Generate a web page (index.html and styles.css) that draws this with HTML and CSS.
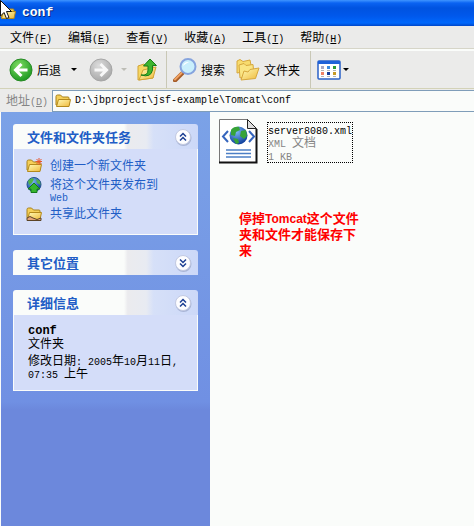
FILE: index.html
```html
<!DOCTYPE html>
<html lang="zh-CN">
<head>
    <meta charset="UTF-8">
    <meta name="viewport" content="width=device-width, initial-scale=1.0">
    <title>conf</title>
    <link rel="stylesheet" href="styles.css">
</head>
<body>
    <svg width="0" height="0" class="defs" aria-hidden="true">
        <defs>
            <linearGradient id="gold" x1="0" y1="0" x2="1" y2="1">
                <stop offset="0" stop-color="#fffbb8"/>
                <stop offset="1" stop-color="#efb93a"/>
            </linearGradient>
            <radialGradient id="green" cx="0.4" cy="0.3" r="0.7">
                <stop offset="0" stop-color="#7fdc62"/>
                <stop offset="1" stop-color="#1f9a22"/>
            </radialGradient>
            <radialGradient id="grey" cx="0.4" cy="0.3" r="0.7">
                <stop offset="0" stop-color="#dcdcdc"/>
                <stop offset="1" stop-color="#a9a9a9"/>
            </radialGradient>
            <radialGradient id="sea" cx="0.4" cy="0.3" r="0.7">
                <stop offset="0" stop-color="#7db8f4"/>
                <stop offset="1" stop-color="#0f3f9c"/>
            </radialGradient>
            <symbol id="folder" viewBox="0 0 16 16">
                <path d="M1 12V3.500Q1 2 2.500 2H5.500L7.500 4H13Q14 4 14 5V12Z" fill="#f5cf58" stroke="#a8811b"/>
                <path d="M1.500 13.500L3.500 6.500H15.500L14 13.500Z" fill="url(#gold)" stroke="#b48a1c"/>
            </symbol>
            <symbol id="chevrons" viewBox="0 0 18 18">
                <circle cx="9.500" cy="10" r="8" fill="#a9b5d6"/>
                <circle cx="9" cy="9" r="7.500" fill="#fdfdff" stroke="#c3cae2"/>
                <path d="M6 8.500L9 5.500L12 8.500M6 12.500L9 9.500L12 12.500" fill="none" stroke="#1c3f94" stroke-width="1.500"/>
            </symbol>
        </defs>
    </svg>

    <header class="title-bar">
        <svg class="icon-small" viewBox="0 0 16 16"><use href="#folder"/></svg>
        <h1 class="title">conf</h1>
        <svg class="cursor" viewBox="0 0 12 20"><path d="M0.500 0.500V16L4 12.500L6.500 18.500L9 17.500L6.500 11.500H11.500Z" fill="#fff" stroke="#111"/></svg>
    </header>

    <nav class="menu-bar">
        <button class="menu">文件<span class="en">(<u>F</u>)</span></button>
        <button class="menu">编辑<span class="en">(<u>E</u>)</span></button>
        <button class="menu">查看<span class="en">(<u>V</u>)</span></button>
        <button class="menu">收藏<span class="en">(<u>A</u>)</span></button>
        <button class="menu">工具<span class="en">(<u>T</u>)</span></button>
        <button class="menu">帮助<span class="en">(<u>H</u>)</span></button>
    </nav>

    <div class="toolbar">
        <div class="tool-group">
            <button class="tool">
                <svg class="icon-tool" viewBox="0 0 24 24">
                    <circle cx="12" cy="12" r="11" fill="url(#green)" stroke="#278a25"/>
                    <path d="M12.500 6L6.500 12L12.500 18M7 12H18.500" fill="none" stroke="#fff" stroke-width="3"/>
                </svg>
                后退
            </button>
            <button class="drop" aria-label="后退列表"><svg class="arrow" viewBox="0 0 6 3"><path d="M0 0H6L3 3Z" fill="#000"/></svg></button>
            <button class="tool" aria-label="前进" disabled>
                <svg class="icon-tool" viewBox="0 0 24 24">
                    <circle cx="12" cy="12" r="11" fill="url(#grey)" stroke="#a6a6a6"/>
                    <path d="M11.500 6L17.500 12L11.500 18M17 12H5.500" fill="none" stroke="#f8f8f8" stroke-width="3"/>
                </svg>
            </button>
            <button class="drop" aria-label="前进列表" disabled><svg class="arrow" viewBox="0 0 6 3"><path d="M0 0H6L3 3Z" fill="#bdbdb6"/></svg></button>
            <button class="tool" aria-label="向上">
                <svg class="icon-tool" viewBox="0 0 24 24">
                    <path d="M2 22V8L8 6L10 8L17 6V20Z" fill="#f6d763" stroke="#d1a336"/>
                    <path d="M3 22L7 12L20 9L17 20Z" fill="url(#gold)" stroke="#d1a336"/>
                    <path d="M5 17Q12 18 12 12V8H7.500L14 1L20.500 7.500H16.500V12Q15 20 5 17Z" fill="#3fb52f" stroke="#167d18"/>
                </svg>
            </button>
        </div>
        <div class="tool-group">
            <button class="tool">
                <svg class="icon-tool" viewBox="0 0 24 24">
                    <path d="M9.500 15L2 22.500" stroke="#a55b28" stroke-width="4" stroke-linecap="round"/>
                    <path d="M8.500 15L2 21.500" stroke="#f0a262" stroke-width="2" stroke-linecap="round"/>
                    <circle cx="15" cy="8.500" r="7.500" fill="#c9effc" stroke="#86a4de" stroke-width="2"/>
                    <path d="M10 8Q11 3.500 16 4Q12 6 10 8Z" fill="#fff"/>
                </svg>
                搜索
            </button>
            <button class="tool folders">
                <svg class="icon-tool" viewBox="0 0 24 24">
                    <path d="M1 15V3L4 1.500L7 3.500L14 2L16 12Z" fill="#f8dc6e" stroke="#d6a73d"/>
                    <path d="M4 20L3 7L8 5.500L10 7.500L17 6.500L18 17Z" fill="#fae583" stroke="#d6a73d"/>
                    <path d="M5 22L8 13L12 14L14 11.500L23 10L19.500 20.500Z" fill="url(#gold)" stroke="#d6a73d"/>
                </svg>
                文件夹
            </button>
        </div>
        <div class="tool-group">
            <button class="tool view" aria-label="查看方式">
                <svg class="icon-tool" viewBox="0 0 24 24">
                    <rect x="1" y="3" width="22" height="18" rx="1" fill="#fff" stroke="#2a62c8" stroke-width="1.500"/>
                    <path d="M1 3H23V6H1Z" fill="#1f62d8"/>
                    <path d="M4 8H7V11H4Z" fill="#a9a9c4"/>
                    <path d="M4 14H7V17H4Z" fill="#f08264"/>
                    <path d="M10 8H13V11H10Z" fill="#3b8be0"/>
                    <path d="M10 14H13V17H10Z" fill="#173f9c"/>
                    <path d="M16 8H19V11H16Z" fill="#2b9b35"/>
                    <path d="M16 14H19V17H16Z" fill="#c69a27"/>
                    <path d="M4 12.500H7M10 12.500H13M16 12.500H19M4 18.500H7M10 18.500H13M16 18.500H19" stroke="#b5b5b5"/>
                </svg>
                <svg class="arrow" viewBox="0 0 6 3"><path d="M0 0H6L3 3Z" fill="#000"/></svg>
            </button>
        </div>
    </div>

    <div class="address-bar">
        <label class="address-label" for="address">地址<span class="en">(<u>D</u>)</span></label>
        <div class="address-field">
            <svg class="icon-small" viewBox="0 0 16 16"><use href="#folder"/></svg>
            <input class="address-input" id="address" type="text" value="D:\jbproject\jsf-example\Tomcat\conf" spellcheck="false">
        </div>
    </div>

    <div class="content">
        <aside class="sidebar">
            <section class="panel">
                <div class="panel-head">
                    <h2 class="panel-title">文件和文件夹任务</h2>
                    <button class="toggle" aria-label="收起"><svg class="chevron" viewBox="0 0 18 18"><use href="#chevrons"/></svg></button>
                </div>
                <div class="panel-body tasks">
                    <a class="task" href="#">
                        <svg class="icon-small" viewBox="0 0 16 16">
                            <use href="#folder"/>
                            <path d="M13 0V7M9.500 3.500H16M10.500 1L15.500 6M15.500 1L10.500 6" stroke="#e8572c"/>
                        </svg>
                        <span>创建一个新文件夹</span>
                    </a>
                    <a class="task" href="#">
                        <svg class="icon-small" viewBox="0 0 16 16">
                            <circle cx="8" cy="7.500" r="7" fill="url(#sea)" stroke="#25528e"/>
                            <path d="M2 4Q5 0 8 2L6 6L3 8ZM10 2L14 4L14.500 8L11 6Z" fill="#50b34a"/>
                            <path d="M8 6L14 12H11V15.500H5V12H2Z" fill="#36b52e" stroke="#137a1b"/>
                        </svg>
                        <span>将这个文件夹发布到<br><span class="en">Web</span></span>
                    </a>
                    <a class="task" href="#">
                        <svg class="icon-small" viewBox="0 0 16 16">
                            <use href="#folder"/>
                            <path d="M1 12Q4 9 7 12L11 13.500L15 12V14.500H1Z" fill="#e5a577" stroke="#5b4427"/>
                        </svg>
                        <span>共享此文件夹</span>
                    </a>
                </div>
            </section>

            <section class="panel">
                <div class="panel-head">
                    <h2 class="panel-title">其它位置</h2>
                    <button class="toggle" aria-label="展开">
                        <svg class="chevron" viewBox="0 0 18 18">
                            <circle cx="9.500" cy="10" r="8" fill="#a9b5d6"/>
                            <circle cx="9" cy="9" r="7.500" fill="#fdfdff" stroke="#c3cae2"/>
                            <path d="M6 5.500L9 8.500L12 5.500M6 9.500L9 12.500L12 9.500" fill="none" stroke="#1c3f94" stroke-width="1.500"/>
                        </svg>
                    </button>
                </div>
            </section>

            <section class="panel">
                <div class="panel-head">
                    <h2 class="panel-title">详细信息</h2>
                    <button class="toggle" aria-label="收起"><svg class="chevron" viewBox="0 0 18 18"><use href="#chevrons"/></svg></button>
                </div>
                <div class="panel-body details">
                    <p class="detail-name">conf</p>
                    <p class="detail">文件夹</p>
                    <p class="detail date">修改日期<span class="en">: 2005</span>年<span class="en">10</span>月<span class="en">11</span>日<span class="en">, 07:35 </span>上午</p>
                </div>
            </section>
        </aside>

        <main class="files">
            <div class="file">
                <svg class="file-icon" viewBox="0 0 40 46">
                    <path d="M1.500 1.500H29.500L38.500 10.500V44.500H1.500Z" fill="#fff" stroke="#777"/>
                    <path d="M1 44.500H38.500V11" fill="none" stroke="#111" stroke-width="2"/>
                    <path d="M29.500 1.500V10.500H38.500Z" fill="#ddd" stroke="#222"/>
                    <path d="M10 13L5 18.500L10 24M31 13L36 18.500L31 24" fill="none" stroke="#3565bd" stroke-width="2"/>
                    <circle cx="20.500" cy="17.500" r="9" fill="url(#sea)"/>
                    <path d="M13 12Q16 8 21 9L22 12L18 14L17 18L13 17ZM23 13L28 12L29 18L26 21L22 18ZM15 20L20 21L21 25L18 26Z" fill="#37a338"/>
                    <path d="M8 32H33M8 35.500H33M8 39H33" stroke="#4c7fc5" stroke-width="1.500"/>
                </svg>
                <div class="file-text">
                    <p class="file-name"><span class="en">server8080.xml</span></p>
                    <p><span class="en">XML </span>文档</p>
                    <p><span class="en">1 KB</span></p>
                </div>
            </div>
            <p class="note">停掉<span class="note-en">Tomcat</span>这个文件夹和文件才能保存下来</p>
        </main>
    </div>
</body>
</html>
```

FILE: styles.css
```css
* {
    box-sizing: border-box;
}
body {
    margin: 0;
    min-height: 100vh;
    display: flex;
    flex-direction: column;
    background-color: #fafcfa;
    color: #000;
    font-family: "Noto Sans CJK SC", sans-serif;
    font-size: 12px;
    line-height: 12px;
}
h1, h2, p {
    margin: 0;
}
button {
    padding: 0;
    border: none;
    background: none;
    color: inherit;
    font: inherit;
}
svg {
    display: block;
    flex: none;
}
.defs {
    position: absolute;
}
/* latin text is half the width of a chinese character */
.en {
    font-family: "Liberation Mono", monospace;
    font-size: 10px;
    line-height: 8px;
}
.icon-small {
    width: 16px;
    height: 16px;
}

/* title bar */
.title-bar {
    position: relative;
    display: flex;
    align-items: center;
    gap: 6px;
    height: 26px;
    background: linear-gradient(#3f95ff 0, #0a63f2 3px, #0053e0 8px, #0058ec 16px, #0068fc 23px, #0046c8 26px);
}
.title {
    color: #fff;
    font-family: "Liberation Mono", monospace;
    font-size: 13px;
    text-shadow: 1px 1px #0a2a80;
}
.cursor {
    position: absolute;
    left: 0;
    top: 0;
    width: 12px;
    height: 20px;
}

/* menu and tools */
.menu-bar {
    display: flex;
    height: 23px;
    padding: 0 2px;
    background-color: #ebebea;
    border-bottom: 1px solid #d6d5c8;
}
.menu {
    padding: 0 8px;
}
.toolbar {
    display: flex;
    height: 40px;
    border-top: 2px solid #fafcfa;
    border-bottom: 1px solid #d3d2b8;
    background-color: #ebebea;
}
.tool-group {
    display: flex;
    align-items: center;
    padding: 0 6px;
}
.tool-group:first-child {
    padding-left: 9px;
}
.tool-group + .tool-group {
    border-left: 1px solid #c9c8b6;
}
.tool {
    display: flex;
    align-items: center;
    gap: 4px;
}
.folders {
    margin-left: 11px;
}
.tool-group:nth-child(2) {
    padding-right: 10px;
}
.view {
    gap: 2px;
}
.icon-tool {
    width: 24px;
    height: 24px;
}
.drop {
    padding: 0 12px 0 10px;
}
.drop:disabled {
    padding: 0 9px 0 8px;
}
.arrow {
    width: 6px;
    height: 3px;
}

/* address */
.address-bar {
    display: flex;
    align-items: center;
    height: 23px;
    background-color: #ebebea;
}
.address-label {
    width: 52px;
    padding-left: 6px;
    color: #858585;
}
.address-field {
    flex: 1;
    display: flex;
    align-items: center;
    gap: 4px;
    height: 22px;
    padding-left: 2px;
    border: 1px solid #7f9db9;
    border-right: none;
    background-color: #fafcfa;
}
.address-input {
    flex: 1;
    min-width: 0;
    padding: 0;
    border: none;
    outline: none;
    background: none;
    color: #000;
    font-family: "Liberation Mono", monospace;
    font-size: 10px;
}

/* side panels */
.content {
    flex: 1;
    display: flex;
}
.sidebar {
    width: 210px;
    display: flex;
    flex-direction: column;
    gap: 15px;
    padding: 12px;
    border-left: 1px solid #fafcfa;
    background: linear-gradient(#7ba2e7, #7090e3 70%, #6c88dc 72%, #6c88dc);
}
.panel-head {
    display: flex;
    align-items: center;
    justify-content: space-between;
    height: 25px;
    padding: 0 6px 0 14px;
    border-radius: 3px 3px 0 0;
    background: linear-gradient(90deg, #fafcfa 60%, #ebebee 62%, #e8ebf2 72%, #d6e0f8 76%, #ccd8f8);
}
.panel-title {
    color: #215dc6;
    font-size: 13px;
    line-height: 16px;
}
.chevron {
    width: 18px;
    height: 18px;
}
.panel-body {
    border: 1px solid #fafcfa;
    border-top: none;
    background-color: #d4ddf9;
}
.tasks {
    display: flex;
    flex-direction: column;
    gap: 3px;
    padding: 9px 12px 12px;
}
.task {
    display: flex;
    gap: 8px;
    color: #215dc6;
    text-decoration: none;
}
.task > span {
    padding-top: 1px;
}
.details {
    padding: 10px 14px;
}
.detail-name {
    font-family: "Liberation Mono", monospace;
    font-weight: bold;
}
.date {
    margin-top: 5px;
}

/* file list */
.files {
    flex: 1;
    padding: 6px 8px;
}
.file {
    display: flex;
    align-items: flex-start;
    gap: 9px;
}
.file-icon {
    width: 40px;
    height: 46px;
}
.file-text {
    margin-top: 4px;
    border: 1px dotted #000;
    color: #858585;
}
.file-name {
    color: #000;
}
.note {
    width: 124px;
    margin: 46px 0 0 21px;
    color: #f00;
    font-size: 13px;
    font-weight: bold;
    line-height: 16px;
}
.note-en {
    font-family: "Liberation Sans", sans-serif;
    font-size: 12px;
    line-height: 12px;
}
```
